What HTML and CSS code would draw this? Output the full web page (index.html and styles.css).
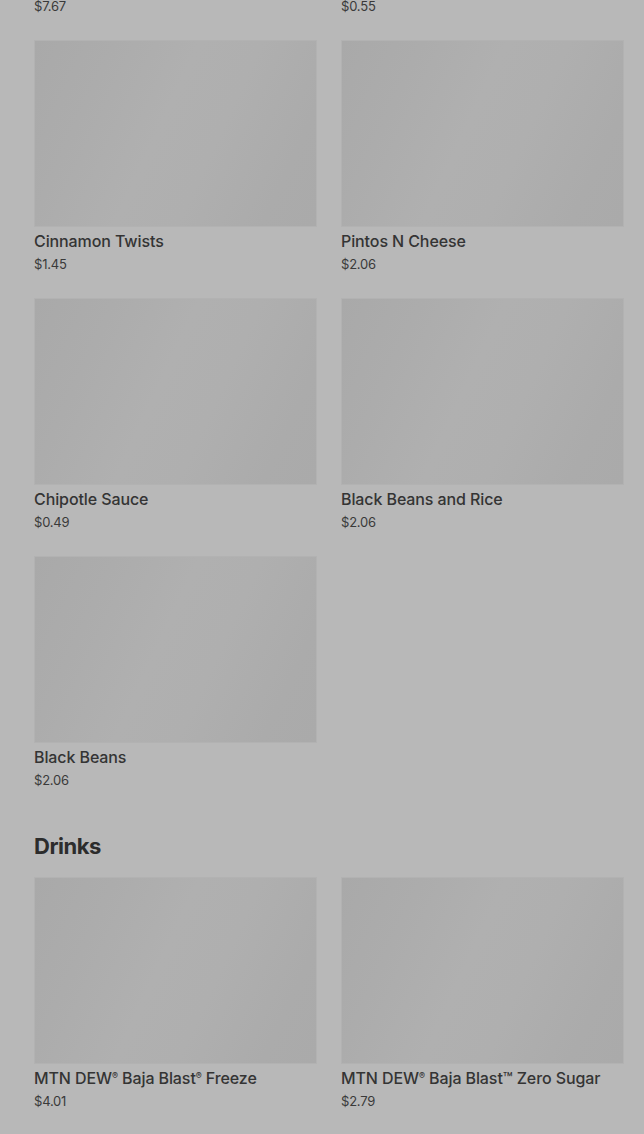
FILE: index.html
```html
<!DOCTYPE html>
<html lang="en">
<head>
<meta charset="utf-8">
<title>Menu</title>
<link rel="stylesheet" href="styles.css">
</head>
<body>
<main class="menu">
  <section class="section section-first">
    <div class="grid">
      <div class="card card-tail"><div class="price">$7.67</div></div>
      <div class="card card-tail"><div class="price">$0.55</div></div>
      <div class="card"><div class="thumb"></div><div class="name">Cinnamon Twists</div><div class="price">$1.45</div></div>
      <div class="card"><div class="thumb"></div><div class="name">Pintos N Cheese</div><div class="price">$2.06</div></div>
      <div class="card"><div class="thumb"></div><div class="name">Chipotle Sauce</div><div class="price">$0.49</div></div>
      <div class="card"><div class="thumb"></div><div class="name">Black Beans and Rice</div><div class="price">$2.06</div></div>
      <div class="card"><div class="thumb"></div><div class="name">Black Beans</div><div class="price">$2.06</div></div>
    </div>
  </section>
  <section class="section">
    <h2 class="section-title">Drinks</h2>
    <div class="grid">
      <div class="card"><div class="thumb"></div><div class="name">MTN DEW<sup>®</sup> Baja Blast<sup>®</sup> Freeze</div><div class="price">$4.01</div></div>
      <div class="card"><div class="thumb"></div><div class="name">MTN DEW<sup>®</sup> Baja Blast™ Zero Sugar</div><div class="price">$2.79</div></div>
      <div class="card card-head"><div class="thumb"></div></div>
      <div class="card card-head"><div class="thumb"></div></div>
    </div>
  </section>
</main>
</body>
</html>
```
FILE: styles.css
```css
html, body {
  margin: 0;
  padding: 0;
  background: #b8b8b8;
  overflow: hidden;
}
body {
  font-family: "Inter", "Roboto", "Liberation Sans", sans-serif;
  color: #333333;
  height: 1134px;
}
.menu {
  padding: 0 20px 0 34px;
}
.section-first {
  margin-top: -4px;
}
.grid {
  display: grid;
  grid-template-columns: 283px 283px;
  column-gap: 24px;
  row-gap: 24px;
}
.card {
  display: flex;
  flex-direction: column;
  height: 234px;
}
.card-tail {
  height: 20px;
}
.card-head {
  height: 188px;
}
.card-tail .price {
  margin-top: 0;
}
.thumb {
  height: 188px;
  box-sizing: border-box;
  border: 1px solid #b2b2b2;
  background: linear-gradient(115deg, #a9a9a9 0%, #acacac 22%, #b0b0b0 45%, #afafaf 62%, #ababab 85%, #aaaaaa 100%);
}
.name {
  margin-top: 4px;
  font-size: 16px;
  line-height: 20px;
  font-weight: 500;
  color: #343434;
  white-space: nowrap;
  letter-spacing: -0.1px;
}
.name sup {
  font-size: 9px;
  line-height: 0;
  vertical-align: 5px;
}
.price {
  margin-top: 3px;
  font-size: 13px;
  line-height: 20px;
  color: #3a3a3a;
  letter-spacing: -0.2px;
}
.section-title {
  margin: 42px 0 17px;
  font-size: 22px;
  line-height: 28px;
  font-weight: 700;
  letter-spacing: -0.5px;
  color: #2c2c2c;
}
```
